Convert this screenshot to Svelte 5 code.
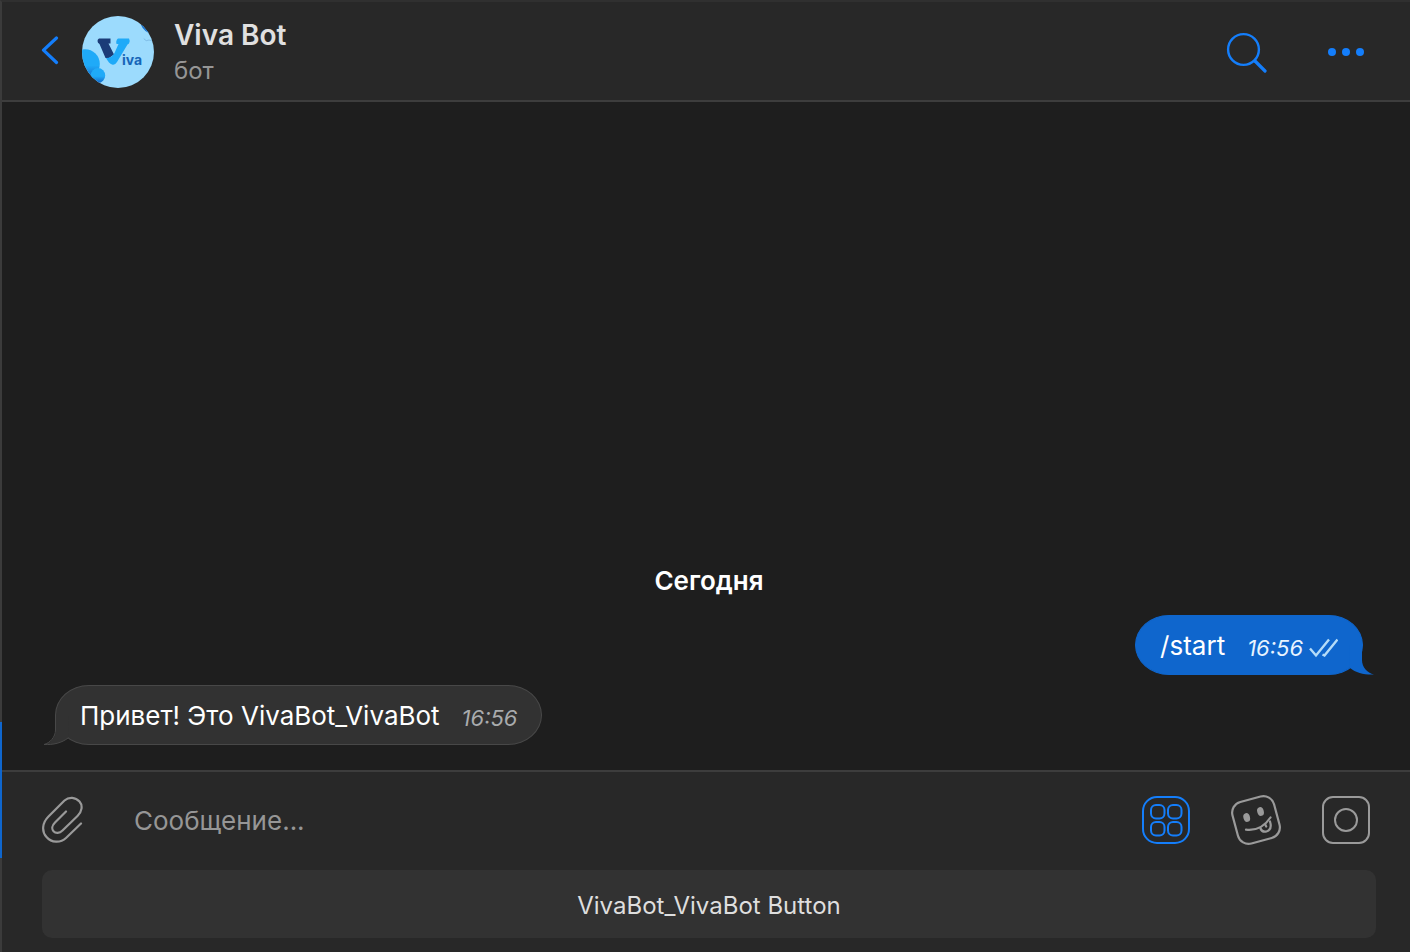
<script>
    let {
        title = 'Viva Bot',
        status = 'бот',
        day = 'Сегодня',
        keyboard = ['VivaBot_VivaBot Button']
    } = $props();

    const messages = [
        { text: '/start', time: '16:56', out: true },
        { text: 'Привет! Это VivaBot_VivaBot', time: '16:56', out: false }
    ];

    let draft = $state('');
</script>

<div class="window">
    <div class="scroll-mark"></div>

    <header class="chat-header">
        <button class="icon-button back" aria-label="Назад">
            <svg width="20" height="32" viewBox="0 0 20 32">
                <path d="M16.500 2 3.500 14.200 16.500 26.500" stroke-width="3.200" />
            </svg>
        </button>

        <svg class="avatar" width="72" height="72" viewBox="0 0 72 72">
            <defs>
                <clipPath id="avatar-clip"><circle cx="36" cy="36" r="36" /></clipPath>
                <linearGradient id="blob" x1="0" y1="0" x2="0" y2="1">
                    <stop offset="0.55" stop-color="#1faaf8" />
                    <stop offset="1" stop-color="#1266c8" />
                </linearGradient>
            </defs>
            <g clip-path="url(#avatar-clip)">
                <rect width="72" height="72" fill="#9cdbfd" />
                <circle cx="3" cy="48" r="14.8" fill="url(#blob)" />
                <ellipse cx="16" cy="59.5" rx="7.2" ry="7.5" fill="url(#blob)" />
                <path d="M59 9q3 7 11 9V5z" fill="#1672d2" />
                <path d="M62 23q2 3 5 1l4 1" fill="none" stroke="#7fbce6" />
            </g>
            <path d="M17 22.500h11.500v5h-2l3 6 2.500 5-5 3.500h-3.500L17.500 28q-2-1-2-3t1.500-2.500z" fill="#1b3c78" />
            <path d="M36 22.500h11q1.500 2.500 0 5l-1.500 1-10.500 17.500q-2 3.500-5 2.500-3-1-6-6.500 6 0 8.500-5l4-9h-2q-1-3.500 1.500-5.500z" fill="#1faaf8" />
            <text x="40" y="49" class="logo-text">iva</text>
        </svg>

        <div class="chat-title">
            <h1>{title}</h1>
            <p>{status}</p>
        </div>

        <button class="icon-button search" aria-label="Поиск">
            <svg width="42" height="42" viewBox="0 0 42 42">
                <circle cx="17.500" cy="18.500" r="15.400" stroke-width="2.400" />
                <path d="M29 30 39 40" stroke-width="3.200" />
            </svg>
        </button>
        <button class="icon-button" aria-label="Ещё">
            <svg class="dots" width="36" height="8" viewBox="0 0 36 8">
                <circle cx="4" cy="4" r="4" />
                <circle cx="18" cy="4" r="4" />
                <circle cx="32" cy="4" r="4" />
            </svg>
        </button>
    </header>

    <main class="history">
        <p class="day">{day}</p>
        {#each messages as message}
            <div class="bubble" class:out={message.out}>
                <span class="text">{message.text}</span>
                <time>{message.time}</time>
                {#if message.out}
                    <svg class="checks" width="30" height="20" viewBox="0 0 30 20">
                        <path d="M2 10.500 8 17.500 21 1.500M14.500 16.500l2 1L29.500 1.500" />
                    </svg>
                {/if}
                <svg class="tail" width="26" height="30" viewBox="0 0 26 30">
                    <path class="tail-fill" d="M13 0V15C13 22 8 28 1 29.500 10 30 19 28 25 23L26 0z" />
                    <path class="tail-line" d="M12.500 0V15C12.500 22 7 28 1 29.500 10 30 19 28 25 23" />
                </svg>
            </div>
        {/each}
    </main>

    <footer class="composer">
        <form class="input-row" onsubmit={(e) => e.preventDefault()}>
            <button class="icon-button muted" type="button" aria-label="Прикрепить файл">
                <svg width="42" height="48" viewBox="0 0 42 48">
                    <path
                        d="M24 15.500 13 26.500C10 29.500 9.500 33 11.500 35.200 13.500 37.500 17.500 37.500 20.500 34.500L35.500 20C40 15.500 41 9.500 37.500 5.500 33.500 1 27 0.500 22.500 4.500L6.500 20.500C0 27 -0.500 35.500 4.500 41 9.500 47 18.500 47.200 24 42L39 27.500"
                        stroke-width="2.200"
                    />
                </svg>
            </button>
            <input type="text" bind:value={draft} placeholder="Сообщение..." aria-label="Сообщение" />
            <button class="icon-button" type="button" aria-label="Клавиатура бота">
                <svg width="48" height="48" viewBox="0 0 48 48">
                    <rect x="1" y="1" width="46" height="46" rx="14" stroke-width="2" />
                    <rect x="9" y="9" width="13.500" height="13.500" rx="5" stroke-width="2" />
                    <rect x="26" y="9" width="13.500" height="13.500" rx="5" stroke-width="2" />
                    <rect x="9" y="26" width="13.500" height="13.500" rx="5" stroke-width="2" />
                    <rect x="26" y="26" width="13.500" height="13.500" rx="5" stroke-width="2" />
                </svg>
            </button>
            <button class="icon-button muted" type="button" aria-label="Стикеры">
                <svg width="52" height="52" viewBox="0 0 52 52">
                    <g stroke-width="2.200">
                        <rect x="4.500" y="4.500" width="43" height="43" rx="11" transform="rotate(-15 26 26)" />
                        <path d="M16 35.700Q31 37.500 40.500 23.500" />
                        <path d="M30.500 34.500Q32 38.500 36.500 37.500 42.500 35.500 40 27.500M35.200 30.500l1 2" />
                    </g>
                    <g class="eyes">
                        <ellipse cx="16.700" cy="23.500" rx="3.300" ry="4.500" transform="rotate(-15 16.700 23.500)" />
                        <ellipse cx="30.500" cy="17.500" rx="3.300" ry="4.500" transform="rotate(-15 30.500 17.500)" />
                    </g>
                </svg>
            </button>
            <button class="icon-button muted" type="button" aria-label="Видеосообщение">
                <svg width="48" height="48" viewBox="0 0 48 48">
                    <rect x="1" y="1" width="46" height="46" rx="10" stroke-width="2" />
                    <circle cx="24" cy="24" r="11" stroke-width="2" />
                </svg>
            </button>
        </form>

        {#each keyboard as label}
            <button class="bot-button">{label}</button>
        {/each}
    </footer>
</div>

<style>
    :global(body) {
        background: #1e1e1e;
    }

    .window {
        border-left: 2px solid #3b3b3b;
        border-top: 2px solid #303030;
        box-sizing: border-box;
        color: #ffffff;
        display: flex;
        flex-direction: column;
        font-family: Inter, 'Liberation Sans', sans-serif;
        font-size: 26px;
        min-height: 100vh;
        position: relative;
    }

    /* sits on top of the window's left border */
    .scroll-mark {
        background: #0f66cd;
        bottom: 94px;
        height: 136px;
        left: -2px;
        position: absolute;
        width: 2px;
    }

    svg {
        display: block;
        fill: none;
        flex-shrink: 0;
        stroke-linecap: round;
        stroke-linejoin: round;
    }

    .icon-button {
        background: none;
        border: 0;
        color: #147efb;
        cursor: pointer;
        flex-shrink: 0;
        padding: 0;
    }

    .icon-button svg {
        stroke: currentColor;
    }

    .icon-button.muted {
        color: #9a9a9a;
    }

    .icon-button .dots,
    .icon-button .eyes {
        fill: currentColor;
        stroke: none;
    }

    .chat-header {
        align-items: center;
        background: #282828;
        border-bottom: 2px solid #3d3d3d;
        box-sizing: border-box;
        display: flex;
        height: 100px;
        padding: 2px 46px 0 38px;
    }

    .back {
        margin-right: 22px;
    }

    .search {
        margin-right: 60px;
    }

    .logo-text {
        fill: #1665b8;
        font-size: 14px;
        font-weight: 700;
    }

    .chat-title {
        flex: 1;
        margin-left: 20px;
        min-width: 0;
        padding-top: 2px;
    }

    h1 {
        color: #e0e0e0;
        font-size: 28px;
        font-weight: 600;
        line-height: 36px;
        margin: 0;
    }

    .chat-title p {
        color: #969696;
        font-size: 24px;
        line-height: 36px;
        margin: 0;
    }

    .history {
        background: #1e1e1e;
        display: flex;
        flex: 1;
        flex-direction: column;
        gap: 10px;
        justify-content: flex-end;
        padding: 24px 47px 25px 53px;
    }

    .day {
        align-self: center;
        font-weight: 600;
        line-height: 32px;
        margin: 0 0 8px;
    }

    .bubble {
        align-items: center;
        align-self: flex-start;
        background: #323232;
        border: 1px solid #484848;
        border-radius: 34px / 30px;
        box-sizing: border-box;
        display: flex;
        height: 60px;
        padding: 0 24px;
        position: relative;
    }

    .bubble.out {
        align-self: flex-end;
        background: #0f66cd;
        border-color: #0f66cd;
    }

    time {
        color: #a9abad;
        font-size: 22px;
        font-style: italic;
        margin-left: 22px;
        padding-top: 5px;
    }

    .out time {
        color: #e8f4ff;
    }

    .checks {
        margin: 6px 0 0 5px;
        stroke: #b5dcf8;
        stroke-linecap: butt;
        stroke-linejoin: miter;
        stroke-width: 2.4;
    }

    .tail {
        bottom: -1px;
        left: -13px;
        position: absolute;
    }

    .tail-fill {
        fill: #323232;
    }

    .tail-line {
        stroke: #484848;
    }

    .out .tail {
        left: auto;
        right: -13px;
        transform: scaleX(-1);
    }

    .out .tail-fill {
        fill: #0f66cd;
    }

    .out .tail-line {
        stroke: none;
    }

    .composer {
        background: #282828;
        border-top: 2px solid #3d3d3d;
        display: flex;
        flex-direction: column;
        padding: 0 34px 14px 40px;
    }

    .input-row {
        align-items: center;
        display: flex;
        gap: 40px;
        height: 96px;
        margin-bottom: 2px;
        padding-right: 6px;
    }

    input {
        background: none;
        border: 0;
        color: #ffffff;
        flex: 1;
        font: inherit;
        line-height: 32px;
        margin-left: 10px;
        min-width: 0;
        outline: none;
        padding: 2px 0 0;
    }

    input::placeholder {
        color: #969696;
        opacity: 1;
    }

    .bot-button {
        background: #323232;
        border: 0;
        border-radius: 10px;
        color: #dedede;
        cursor: pointer;
        font-family: inherit;
        font-size: 24px;
        height: 68px;
        padding: 2px 16px 0;
    }
</style>
